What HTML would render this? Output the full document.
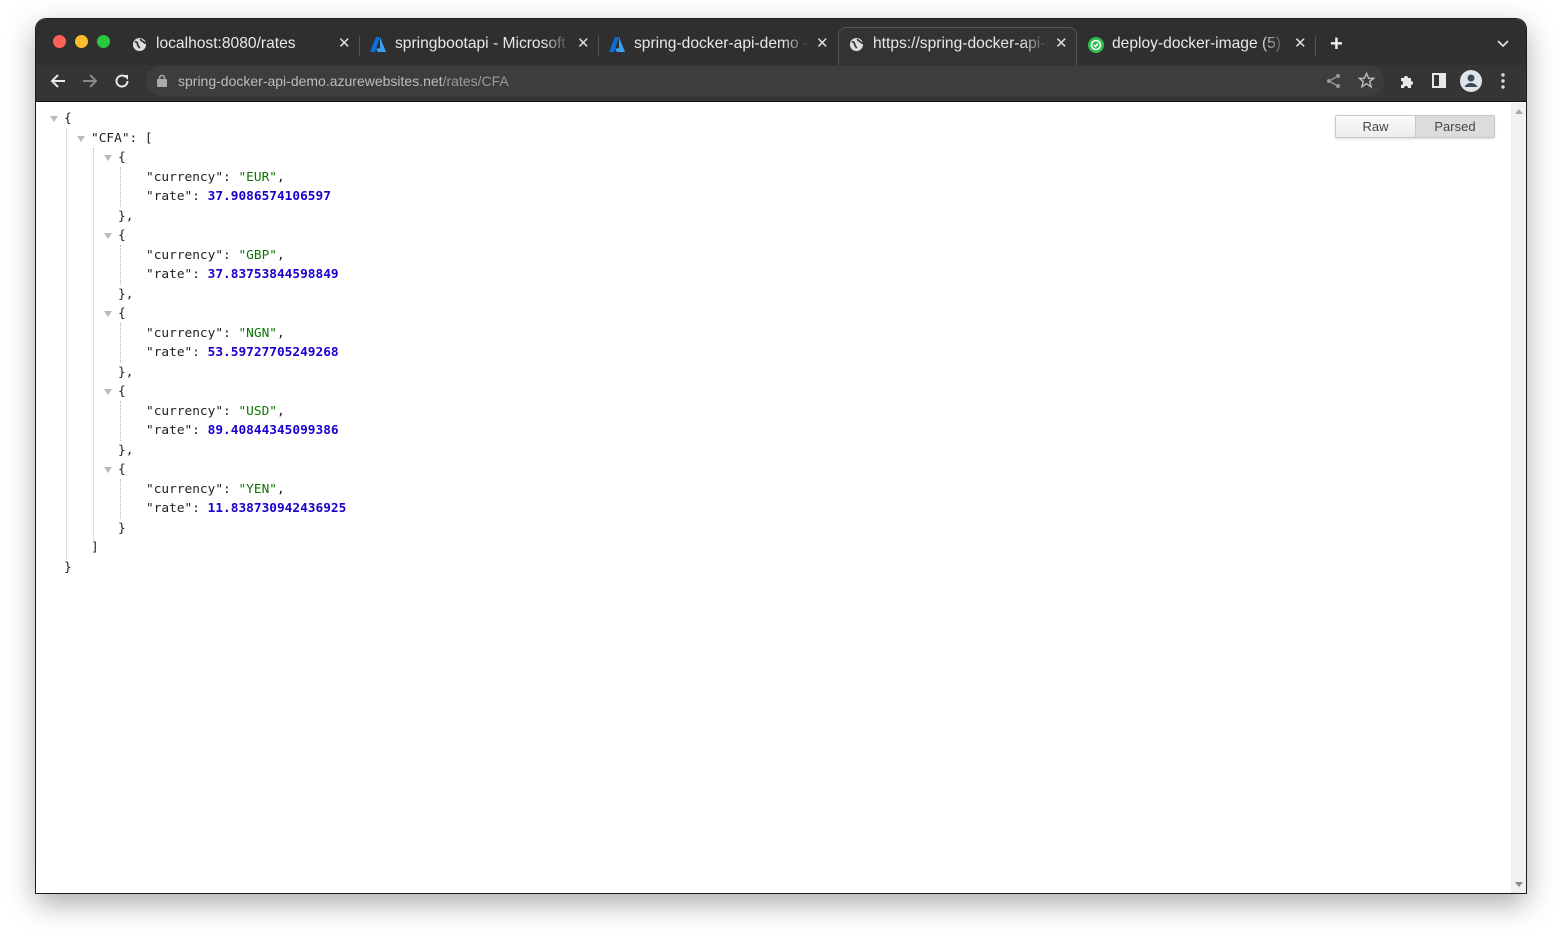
<!DOCTYPE html>
<html><head><meta charset="utf-8"><style>
*{margin:0;padding:0;box-sizing:border-box}
body{width:1561px;height:944px;background:#fff;position:relative;overflow:hidden;font-family:"Liberation Sans","DejaVu Sans",sans-serif}
.win{position:absolute;left:36px;top:19px;width:1490px;height:874px;border-radius:10px 10px 0 0;overflow:hidden;background:#fff;box-shadow:0 10px 30px rgba(0,0,0,.35),0 0 0 1px #222}
.strip{position:absolute;left:0;top:0;width:100%;height:46px;background:#2f2f2f}
.tb{position:absolute;left:0;top:46px;width:100%;height:37px;background:#353535;border-bottom:1px solid #111}
.dot{position:absolute;top:16px;width:13px;height:13px;border-radius:50%}
.tab{position:absolute;top:9px;height:37px;color:#e8e8e8;font-size:15.6px;line-height:32px;white-space:nowrap;overflow:hidden}
.tab .t{position:absolute;left:36px;top:0;width:175px;overflow:hidden;-webkit-mask-image:linear-gradient(90deg,#000 85%,transparent)}
.tab .x{position:absolute;top:0;font-size:15px;color:#ddd}
.sep{position:absolute;top:17px;width:1px;height:20px;background:#555}
.omni{position:absolute;left:110px;top:4px;width:1238px;height:30px;border-radius:15px;background:#3d3d3d}
.url{position:absolute;left:142px;top:8px;font-size:14px;color:#bdbdbd}
.url b{font-weight:normal;color:#9a9a9a}
.code{position:absolute;left:0;top:90px;font-family:"DejaVu Sans Mono","Liberation Mono",monospace;font-size:12.8px;line-height:19.5px;color:#222}
.l{position:absolute;white-space:pre}
.s{color:#0b7500}.n{color:#1a01cc;font-weight:bold}
.ar{position:absolute;width:0;height:0;border-left:4px solid transparent;border-right:4px solid transparent;border-top:6px solid #bbb}
.vl{position:absolute;border-left:1px dotted #bbb;width:0}
.btns{position:absolute;left:1299px;top:96px;height:23px;display:flex;border:1px solid #c8c8c8;border-radius:2px;font-size:13px;color:#444;box-shadow:0 1px 2px rgba(0,0,0,.15)}
.btns div{line-height:21px;text-align:center}
.sb{position:absolute;left:1475px;top:84px;width:15px;height:790px;background:#f1f1f1}
</style></head><body>
<div class="win">
<div class="strip">
 <div class="dot" style="left:17px;background:#fe5f57"></div>
 <div class="dot" style="left:39px;background:#febc2e"></div>
 <div class="dot" style="left:61px;background:#28c840"></div>
 <div class="tab" style="left:96px;width:225px">
  <svg style="position:absolute;left:0;top:9px" width="15" height="15" viewBox="0 0 16 16"><circle cx="8" cy="8" r="7" fill="#ddd"/><path d="M3 5c2 0 3 1 3 3s2 2 2 4M9 2c0 2 2 2 3 3s2 2 3 1" stroke="#2f2f2f" stroke-width="1.8" fill="none"/></svg>
  <div class="t" style="left:24px">localhost:8080/rates</div><div class="x" style="left:206px">✕</div></div>
 <div class="sep" style="left:323px"></div>
 <div class="tab" style="left:334px;width:225px">
  <svg style="position:absolute;left:0;top:9px" width="16" height="15" viewBox="0 0 16 15"><path d="M6 0h4L5 15H0z" fill="#0a6fd6"/><path d="M10 0l6 15H8l-2-3 4-1z" fill="#3aa0f3"/></svg>
  <div class="t" style="left:25px">springbootapi - Microsoft Azure</div><div class="x" style="left:207px">✕</div></div>
 <div class="sep" style="left:562px"></div>
 <div class="tab" style="left:573px;width:225px">
  <svg style="position:absolute;left:0;top:9px" width="16" height="15" viewBox="0 0 16 15"><path d="M6 0h4L5 15H0z" fill="#0a6fd6"/><path d="M10 0l6 15H8l-2-3 4-1z" fill="#3aa0f3"/></svg>
  <div class="t" style="left:25px">spring-docker-api-demo - Microsoft</div><div class="x" style="left:207px">✕</div></div>
 <div style="position:absolute;left:802px;top:8px;width:239px;height:40px;border:1px solid #555;border-bottom:none;border-radius:8px 8px 0 0;background:#333"></div>
 <div class="tab" style="left:813px;width:225px">
  <svg style="position:absolute;left:0;top:9px" width="15" height="15" viewBox="0 0 16 16"><circle cx="8" cy="8" r="7" fill="#ddd"/><path d="M3 5c2 0 3 1 3 3s2 2 2 4M9 2c0 2 2 2 3 3s2 2 3 1" stroke="#333" stroke-width="1.8" fill="none"/></svg>
  <div class="t" style="left:24px">https://spring-docker-api-demo</div><div class="x" style="left:206px">✕</div></div>
 <div class="tab" style="left:1052px;width:225px">
  <svg style="position:absolute;left:0;top:9px" width="16" height="16" viewBox="0 0 16 16"><circle cx="8" cy="8" r="8" fill="#2cbe4e"/><circle cx="8" cy="8" r="4.5" fill="none" stroke="#fff" stroke-width="1.6"/><path d="M6 8l1.5 1.5L10 6.5" stroke="#fff" stroke-width="1.5" fill="none"/></svg>
  <div class="t" style="left:24px">deploy-docker-image (5) · GitHub</div><div class="x" style="left:206px">✕</div></div>
 <div class="sep" style="left:1279px"></div>
 <div style="position:absolute;left:1294px;top:14px;color:#eee;font-size:22px;line-height:22px;font-weight:bold">+</div>
 <svg style="position:absolute;left:1461px;top:21px" width="12" height="8" viewBox="0 0 12 8"><path d="M1 1l5 5 5-5" stroke="#ddd" stroke-width="1.8" fill="none"/></svg>
</div>
<div class="tb">
 <svg style="position:absolute;left:14px;top:8px" width="16" height="16" viewBox="0 0 16 16"><path d="M15 8H2M8 2L2 8l6 6" stroke="#e8e8e8" stroke-width="2" fill="none"/></svg>
 <svg style="position:absolute;left:46px;top:8px" width="16" height="16" viewBox="0 0 16 16"><path d="M1 8h13M8 2l6 6-6 6" stroke="#888" stroke-width="2" fill="none"/></svg>
 <svg style="position:absolute;left:78px;top:8px" width="16" height="16" viewBox="0 0 16 16"><path d="M13.5 8A5.5 5.5 0 1 1 11.5 3.8" stroke="#e8e8e8" stroke-width="2" fill="none"/><path d="M9 2h5v5z" fill="#e8e8e8"/></svg>
 <div class="omni" style="top:1px"></div>
 <svg style="position:absolute;left:121px;top:9px" width="10" height="13" viewBox="0 0 10 13"><rect x="0" y="5" width="10" height="8" rx="1" fill="#aaa"/><path d="M2.5 6V4a2.5 2.5 0 0 1 5 0v2" stroke="#aaa" stroke-width="1.6" fill="none"/></svg>
 <div class="url">spring-docker-api-demo.azurewebsites.net<b>/rates/CFA</b></div>
 <svg style="position:absolute;left:1290px;top:8px" width="16" height="16" viewBox="0 0 16 16"><circle cx="12" cy="3" r="2" fill="#999"/><circle cx="3" cy="8" r="2" fill="#999"/><circle cx="12" cy="13" r="2" fill="#999"/><path d="M12 3L3 8l9 5" stroke="#999" stroke-width="1.3" fill="none"/></svg>
 <svg style="position:absolute;left:1322px;top:7px" width="17" height="17" viewBox="0 0 24 24"><path d="M12 2l3 7h7l-5.5 4.5 2 7.5-6.5-4.5-6.5 4.5 2-7.5L2 9h7z" stroke="#bbb" stroke-width="2" fill="none"/></svg>
 <svg style="position:absolute;left:1363px;top:8px" width="16" height="16" viewBox="0 0 16 16"><path d="M2 5h3a2 2 0 1 1 4 0h3v3a2 2 0 1 1 0 4v3H9a2 2 0 1 0-4 0H2v-3a2 2 0 1 0 0-4z" fill="#e8e8e8"/></svg>
 <svg style="position:absolute;left:1396px;top:8px" width="14" height="15" viewBox="0 0 14 15"><rect x="1" y="1" width="12" height="13" fill="none" stroke="#e8e8e8" stroke-width="2"/><rect x="7" y="1" width="6" height="13" fill="#e8e8e8"/></svg>
 <svg style="position:absolute;left:1424px;top:5px" width="22" height="22" viewBox="0 0 22 22"><circle cx="11" cy="11" r="11" fill="#dfe3ea"/><circle cx="11" cy="8" r="3.5" fill="#3d4a5c"/><path d="M4.5 17c1.5-3 4-4 6.5-4s5 1 6.5 4z" fill="#3d4a5c"/></svg>
 <svg style="position:absolute;left:1465px;top:8px" width="4" height="16" viewBox="0 0 4 16"><circle cx="2" cy="2" r="1.7" fill="#ddd"/><circle cx="2" cy="8" r="1.7" fill="#ddd"/><circle cx="2" cy="14" r="1.7" fill="#ddd"/></svg>
</div>
<div class="sb"><div style="position:absolute;left:4px;top:6px;border-left:4px solid transparent;border-right:4px solid transparent;border-bottom:5px solid #aaa"></div><div style="position:absolute;left:4px;bottom:6px;border-left:4px solid transparent;border-right:4px solid transparent;border-top:5px solid #888"></div></div>
<div class="btns"><div style="width:80px;background:linear-gradient(#fbfbfb,#ececec);border-right:1px solid #c8c8c8">Raw</div><div style="width:78px;background:#dcdcdc">Parsed</div></div>
<div class="code" id="c"></div>
</div>
<script>
var L=[[0,'{',1],[1,'"CFA": [',1],[2,'{',1],[3,'"currency": <s>"EUR"</s>,'],[3,'"rate": <n>37.9086574106597</n>'],[2,'},'],
[2,'{',1],[3,'"currency": <s>"GBP"</s>,'],[3,'"rate": <n>37.83753844598849</n>'],[2,'},'],
[2,'{',1],[3,'"currency": <s>"NGN"</s>,'],[3,'"rate": <n>53.59727705249268</n>'],[2,'},'],
[2,'{',1],[3,'"currency": <s>"USD"</s>,'],[3,'"rate": <n>89.40844345099386</n>'],[2,'},'],
[2,'{',1],[3,'"currency": <s>"YEN"</s>,'],[3,'"rate": <n>11.838730942436925</n>'],[2,'}'],[1,']'],[0,'}']];
var h='';var xs=[28,55,82,110];
L.forEach(function(r,i){var t=i*19.5;var s=r[1].replace(/<s>/g,'<span class="s">').replace(/<\/s>/g,'</span>').replace(/<n>/g,'<span class="n">').replace(/<\/n>/g,'</span>');
h+='<div class="l" style="left:'+xs[r[0]]+'px;top:'+t+'px">'+s+'</div>';
if(r[2])h+='<div class="ar" style="left:'+(xs[r[0]]-14)+'px;top:'+(t+7)+'px"></div>';});
h+='<div class="vl" style="left:30px;top:20px;height:431px"></div>';
h+='<div class="vl" style="left:57px;top:39px;height:392px"></div>';
for(var k=0;k<5;k++)h+='<div class="vl" style="left:84px;top:'+(58+k*78)+'px;height:40px"></div>';
document.getElementById('c').innerHTML=h;
</script>
</body></html>
